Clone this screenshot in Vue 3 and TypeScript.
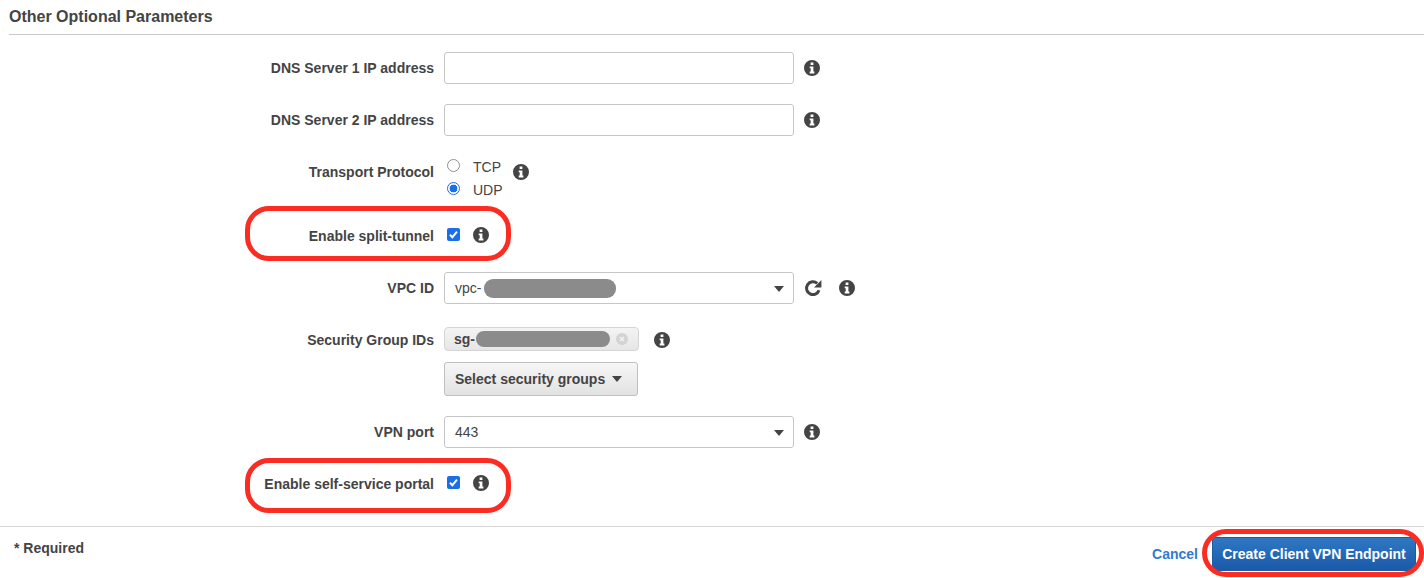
<script setup lang="ts">
const infoPath =
  'M8 0a8 8 0 1 0 0 16A8 8 0 0 0 8 0Zm-1.4 2.6h2.8v2.3H6.6V2.6ZM5.7 6.4h3.7v5.2h1v1.8H5.7v-1.8h1v-3.4h-1V6.4Z'
</script>

<template>
  <div class="page">
    <h2 class="heading">Other Optional Parameters</h2>

    <div class="form">
      <div class="row">
        <label class="label">DNS Server 1 IP address</label>
        <div class="controls">
          <input class="field" type="text" />
          <svg class="info" viewBox="0 0 16 16"><path :d="infoPath" fill-rule="evenodd" /></svg>
        </div>
      </div>

      <div class="row">
        <label class="label">DNS Server 2 IP address</label>
        <div class="controls">
          <input class="field" type="text" />
          <svg class="info" viewBox="0 0 16 16"><path :d="infoPath" fill-rule="evenodd" /></svg>
        </div>
      </div>

      <div class="row transport">
        <label class="label">Transport Protocol</label>
        <div class="controls">
          <div class="radios">
            <div class="radio-line"><span class="radio"></span><span class="radio-text">TCP</span></div>
            <div class="radio-line"><span class="radio on"></span><span class="radio-text">UDP</span></div>
          </div>
          <svg class="info" viewBox="0 0 16 16"><path :d="infoPath" fill-rule="evenodd" /></svg>
        </div>
      </div>

      <div class="row check-row split">
        <label class="label">Enable split-tunnel</label>
        <div class="controls">
          <span class="check">
            <svg viewBox="0 0 13 13"><path d="M3 6.8 5.4 9.2 10 3.6" /></svg>
          </span>
          <svg class="info" viewBox="0 0 16 16"><path :d="infoPath" fill-rule="evenodd" /></svg>
        </div>
      </div>

      <div class="row">
        <label class="label">VPC ID</label>
        <div class="controls">
          <div class="field select">
            <span>vpc-</span><span class="redact vpc"></span>
            <i class="caret"></i>
          </div>
          <svg class="refresh" viewBox="0 0 18 18">
            <path d="M15 11.2A6.4 6.4 0 1 1 13.2 4.4" fill="none" stroke="#444" stroke-width="3" />
            <path d="M17.4 1V8.4H10Z" fill="#444" />
          </svg>
          <svg class="info" viewBox="0 0 16 16"><path :d="infoPath" fill-rule="evenodd" /></svg>
        </div>
      </div>

      <div class="row security">
        <label class="label">Security Group IDs</label>
        <div class="stack">
          <div class="controls chip-line">
            <div class="chip">
              <span>sg-</span><span class="redact sg"></span>
              <svg class="chip-x" viewBox="0 0 12 12">
                <circle cx="6" cy="6" r="6" fill="#d3d3d3" />
                <path d="M4 4l4 4M8 4l-4 4" stroke="#f4f4f4" stroke-width="1.4" />
              </svg>
            </div>
            <svg class="info" viewBox="0 0 16 16"><path :d="infoPath" fill-rule="evenodd" /></svg>
          </div>
          <button class="pick" type="button">Select security groups<i class="caret"></i></button>
        </div>
      </div>

      <div class="row">
        <label class="label">VPN port</label>
        <div class="controls">
          <div class="field select">
            <span>443</span>
            <i class="caret"></i>
          </div>
          <svg class="info" viewBox="0 0 16 16"><path :d="infoPath" fill-rule="evenodd" /></svg>
        </div>
      </div>

      <div class="row check-row portal">
        <label class="label">Enable self-service portal</label>
        <div class="controls">
          <span class="check">
            <svg viewBox="0 0 13 13"><path d="M3 6.8 5.4 9.2 10 3.6" /></svg>
          </span>
          <svg class="info" viewBox="0 0 16 16"><path :d="infoPath" fill-rule="evenodd" /></svg>
        </div>
      </div>
    </div>

    <div class="footer">
      <span class="required">* Required</span>
      <div class="actions">
        <a class="cancel">Cancel</a>
        <button class="primary" type="button">Create Client VPN Endpoint</button>
      </div>
    </div>

    <!-- red annotations drawn over the screenshot -->
    <div class="mark mark-split"></div>
    <div class="mark mark-portal"></div>
    <div class="mark mark-create"></div>
  </div>
</template>

<style>
html,
body {
  margin: 0;
  background: #fff;
}
</style>

<style scoped>
.page {
  position: relative;
  width: 1424px;
  height: 578px;
  overflow: hidden;
  font-family: 'Liberation Sans', Arial, sans-serif;
  font-size: 14px;
  color: #444;
}

.heading {
  margin: 0 0 0 9px;
  height: 34px;
  box-sizing: content-box;
  border-bottom: 1px solid #c9c9c9;
  font-size: 16px;
  font-weight: 700;
  line-height: 34px;
  color: #444;
}

.form {
  display: flex;
  flex-direction: column;
  gap: 20px;
  padding-top: 17px;
}

.row {
  display: grid;
  grid-template-columns: 434px 1fr;
  column-gap: 10px;
  align-items: center;
}

.label {
  text-align: right;
  font-weight: 700;
  color: #444;
}

.controls {
  display: flex;
  align-items: center;
  gap: 10px;
}

.info {
  width: 16px;
  height: 16px;
  fill: #444;
  flex-shrink: 0;
}

.field {
  width: 350px;
  height: 32px;
  box-sizing: border-box;
  border: 1px solid #c6c6c6;
  border-radius: 3px;
  background: #fff;
  padding: 0 10px;
  font: inherit;
  color: #444;
}

.select {
  position: relative;
  display: flex;
  align-items: center;
}

.select .caret {
  position: absolute;
  right: 9px;
  top: 13px;
}

.caret {
  display: inline-block;
  width: 0;
  height: 0;
  border-left: 5.5px solid transparent;
  border-right: 5.5px solid transparent;
  border-top: 6px solid #444;
}

.redact {
  display: inline-block;
  background: #8b8b8b;
  border-radius: 8px;
}

.redact.vpc {
  width: 132px;
  height: 19px;
  margin-left: 3px;
  border-radius: 9px;
}

.redact.sg {
  width: 134px;
  height: 16px;
}

.refresh {
  width: 18px;
  height: 18px;
  flex-shrink: 0;
  margin-right: 7px;
}

.transport {
  height: 42px;
  align-items: start;
}

.transport .label {
  line-height: 32px;
}

.transport .controls {
  align-items: flex-start;
}

.transport .info {
  margin-top: 8px;
}

.radios {
  display: flex;
  flex-direction: column;
  gap: 4px;
}

.radio-line {
  display: flex;
  align-items: center;
  gap: 13px;
  height: 19px;
  line-height: 19px;
  margin-left: 3px;
}

.radio-text {
  margin-top: 3px;
}

.radio {
  width: 13px;
  height: 13px;
  box-sizing: border-box;
  border: 1px solid #8f8f8f;
  border-radius: 50%;
  background: #fff;
}

.radio.on {
  border: 1px solid #1a6fe8;
  background: radial-gradient(circle, #1a6fe8 0 3.6px, #fff 4.2px);
}

.check-row .controls {
  gap: 13px;
  padding-left: 3px;
}

.check-row .label {
  margin-top: 2px;
}

.split {
  height: 34px;
}

.portal {
  height: 30px;
}

.check {
  display: block;
  width: 13px;
  height: 13px;
  margin-bottom: 2px;
  border-radius: 2px;
  background: #1a6fe8;
}

.check svg {
  display: block;
  fill: none;
  stroke: #fff;
  stroke-width: 2;
}

.security {
  align-items: start;
}

.security .label {
  line-height: 32px;
}

.stack {
  display: flex;
  flex-direction: column;
  align-items: flex-start;
  gap: 11px;
  padding-top: 3px;
}

.chip-line {
  gap: 15px;
}

.chip-line .info {
  margin-top: 2px;
}

.chip {
  display: flex;
  align-items: center;
  width: 195px;
  height: 24px;
  box-sizing: border-box;
  padding: 0 10px 0 9px;
  border: 1px solid #d5d5d5;
  border-radius: 4px;
  background: linear-gradient(#f4f4f4, #e6e6e6);
  font-weight: 700;
}

.chip-x {
  width: 12px;
  height: 12px;
  margin-left: auto;
}

.redact.sg {
  margin-left: 1px;
}

.pick {
  display: flex;
  align-items: center;
  gap: 7px;
  width: 194px;
  height: 34px;
  box-sizing: border-box;
  padding: 0 0 0 10px;
  border: 1px solid #c0c0c0;
  border-radius: 3px;
  background: linear-gradient(#f6f6f6, #e2e2e2);
  font: inherit;
  font-weight: 700;
  color: #444;
}

.footer {
  display: flex;
  justify-content: space-between;
  margin-top: 28px;
  height: 51px;
  border-top: 1px solid #d5d5d5;
}

.required {
  margin: 13px 0 0 14px;
  font-size: 14px;
  line-height: 16px;
  font-weight: 700;
}

.actions {
  display: flex;
  align-items: center;
  gap: 14px;
  padding: 10px 8px 0 0;
  height: 34px;
}

.cancel {
  font-weight: 700;
  color: #2f7bd0;
}

.primary {
  width: 204px;
  height: 34px;
  box-sizing: border-box;
  border: 1px solid #1b5ca8;
  border-radius: 3px;
  background: linear-gradient(#2f78c4, #1a5aa8);
  font: inherit;
  font-weight: 700;
  color: #fff;
  padding: 0;
}

.mark {
  position: absolute;
  box-sizing: border-box;
  border: 5px solid #fb2c22;
  border-radius: 24px;
  pointer-events: none;
}

.mark-split {
  left: 245px;
  top: 206px;
  width: 266px;
  height: 55px;
}

.mark-portal {
  left: 245px;
  top: 458px;
  width: 266px;
  height: 55px;
}

.mark-create {
  left: 1202px;
  top: 529px;
  width: 222px;
  height: 48px;
}
</style>
